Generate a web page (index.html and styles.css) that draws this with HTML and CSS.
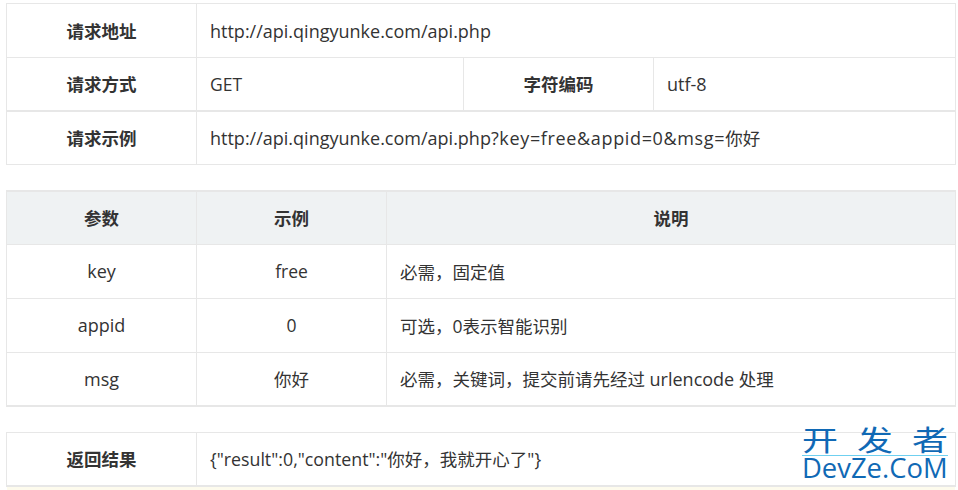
FILE: index.html
```html
<!DOCTYPE html>
<html lang="zh-CN">
<head>
<meta charset="utf-8">
<title>API</title>
<link rel="stylesheet" href="styles.css">
</head>
<body>
<table class="tbl t1">
<colgroup><col class="c1"><col class="c2"><col class="c3"><col></colgroup>
<tr class="r54"><th>请求地址</th><td colspan="3"><span class="lat">http://api.qingyunke.com/api.php</span></td></tr>
<tr class="r53 thick"><th>请求方式</th><td>GET</td><th>字符编码</th><td><span class="lat">utf-8</span></td></tr>
<tr class="r54"><th>请求示例</th><td colspan="3"><span class="lat">http://api.qingyunke.com/api.php<span class="query">?key=free&amp;appid=0&amp;msg=</span></span>你好</td></tr>
</table>
<table class="tbl t2">
<colgroup><col class="c1"><col class="c1"><col></colgroup>
<tr class="r53 head"><th>参数</th><th>示例</th><th>说明</th></tr>
<tr class="r54"><td class="ctr"><span class="lat">key</span></td><td class="ctr">free</td><td>必需，固定值</td></tr>
<tr class="r54"><td class="ctr"><span class="lat">appid</span></td><td class="ctr">0</td><td>可选，0表示智能识别</td></tr>
<tr class="r54"><td class="ctr"><span class="lat">msg</span></td><td class="ctr">你好</td><td>必需，关键词，提交前请先经过 <span class="lat">urlencode</span> 处理</td></tr>
</table>
<table class="tbl t3">
<colgroup><col class="c1"><col></colgroup>
<tr class="r53"><th>返回结果</th><td><span class="json">{"result":0,"content":"</span>你好，我就开心了<span class="json">"}</span></td></tr>
</table>
<div class="note"></div>
<div class="mark">
<div class="mark-cn"><span>开</span><span>发</span><span>者</span></div>
<div class="mark-en">DevZe.CoM</div>
</div>
</body>
</html>
```
FILE: styles.css
```css
html, body { margin: 0; padding: 0; background: #fff; }
body {
  width: 958px; height: 490px; overflow: hidden; position: relative;
  padding-top: 3px; box-sizing: border-box;
  font-family: "Open Sans", "Noto Sans CJK SC", sans-serif;
  font-size: 17.5px; color: #333;
}
.tbl {
  border-collapse: collapse; table-layout: fixed;
  width: 950px; margin-left: 6px;
}
.tbl th, .tbl td {
  border: 1px solid #e7e7e7; padding: 0 13px; text-align: left; font-weight: 400;
  box-sizing: border-box;
}
.tbl th { text-align: center; font-weight: 700; }
.tbl td.ctr { text-align: center; }
.lat { font-size: 18px; }
.query { letter-spacing: .65px; }
.json { font-size: 17.8px; }
.c1 { width: 190px; }
.c2 { width: 267px; }
.c3 { width: 190px; }
.r54 { height: 54px; }
.r53 { height: 53px; }
.head th { background: #eff2f3; }
.t2 { margin-top: 25px; border-top: 2px solid #e7e7e7; border-bottom: 2px solid #e7e7e7; }
.t3 { margin-top: 25px; border-bottom: 2px solid #e7e7e7; }
.thick th, .thick td { border-bottom-width: 2px; }
.note { height: 4px; margin-left: 7px; width: 948px; background: #fdfbed; }
.mark {
  position: absolute; left: 802px; top: 424px; width: 146px;
  color: #1069b5;
}
.mark-cn {
  display: flex; justify-content: space-between;
  font-family: "Noto Sans CJK SC", sans-serif; font-weight: 400;
  font-size: 36px; line-height: 36px; height: 36px;
  transform: scaleY(.8); transform-origin: 0 0;
  margin-bottom: -5px;
}
.mark-en {
  font-family: "Open Sans", sans-serif; font-size: 27.4px; line-height: 24px; white-space: nowrap;
  border-top: 1px solid #6fd0f0;
}
```
